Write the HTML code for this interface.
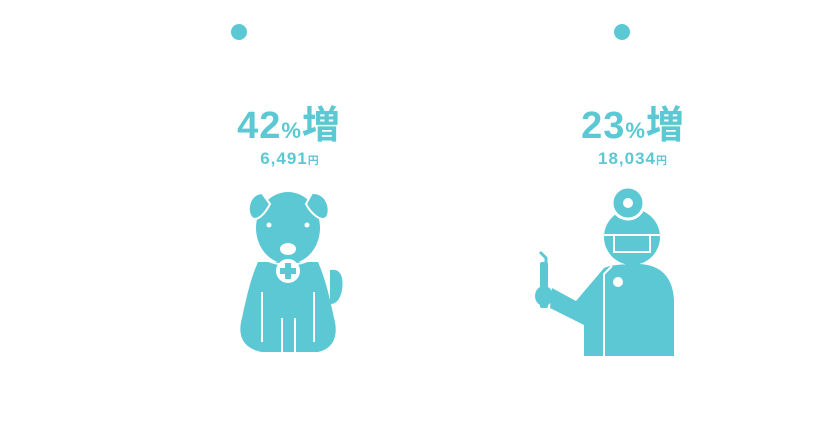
<!DOCTYPE html><html><head><style>
body{margin:0;width:830px;height:430px;background:#fff;overflow:hidden;position:relative;font-family:"Liberation Sans","Noto Sans CJK JP",sans-serif;color:#5bc8d3}
.t{position:absolute;font-weight:bold;white-space:nowrap;text-align:center}
.big{font-size:38px;top:94px;letter-spacing:1px}
.big small{font-size:22px}
.sub{font-size:17px;top:149px;letter-spacing:1px}
.sub small{font-size:11px}
</style></head><body>
<div class="t big" style="left:229px;width:120px">42<small>%</small>増</div>
<div class="t sub" style="left:240px;width:100px">6,491<small>円</small></div>
<div class="t big" style="left:573px;width:120px">23<small>%</small>増</div>
<div class="t sub" style="left:583px;width:100px">18,034<small>円</small></div>
<svg width="830" height="430" style="position:absolute;left:0;top:0" fill="#5bc8d3">
<circle cx="239" cy="32" r="8"/><circle cx="622" cy="32" r="8"/>
<!-- dog -->
<path d="M330 270 C340 268 344 276 342 290 C340 300 336 304 330 304 Z"/>
<path d="M258 262 C250 280 246 300 242 318 C238 332 240 348 262 352 L318 352 C336 348 338 332 334 318 C330 300 326 280 318 262 Z"/>
<ellipse cx="288" cy="228" rx="32" ry="36"/>
<path d="M262 193 C248 194 246 212 252 218 C258 222 266 212 270 204 Z" stroke="#fff" stroke-width="2"/>
<path d="M312 193 C328 192 332 212 326 218 C320 222 310 212 306 204 Z" stroke="#fff" stroke-width="2"/>
<g fill="#fff">
<circle cx="269" cy="225" r="2.5"/><circle cx="307" cy="225" r="2.5"/>
<ellipse cx="288" cy="249" rx="8" ry="6"/>
<circle cx="288" cy="271" r="12"/>
<path d="M262 258 Q288 272 314 258" stroke="#fff" stroke-width="2" fill="none"/>
<rect x="261" y="292" width="2" height="50"/><rect x="313" y="292" width="2" height="50"/>
<rect x="281" y="318" width="2" height="34"/><rect x="294" y="318" width="2" height="34"/>
</g>
<rect x="285" y="263" width="6" height="16"/><rect x="280" y="268" width="16" height="6"/>
<!-- dentist -->
<circle cx="632" cy="237" r="28"/>
<circle cx="628" cy="203" r="16" stroke="#fff" stroke-width="3"/><circle cx="628" cy="203" r="5" fill="#fff"/>
<path d="M603 235 L661 235 M614 235 L614 252 L650 252 L650 235" stroke="#fff" stroke-width="2" fill="none"/>
<path d="M604 268 Q612 264 640 264 Q672 266 674 300 L674 356 L584 356 L584 325 L550 308 L552 288 L576 301 Z"/>
<ellipse cx="544" cy="296" rx="9" ry="10"/>
<rect x="540" y="262" width="8" height="46" rx="2"/>
<path d="M540 252 L546 258 L546 266" stroke="#5bc8d3" stroke-width="3" fill="none"/>
<path d="M612 266 L604 274 L604 356" stroke="#fff" stroke-width="2" fill="none"/>
<circle cx="618" cy="282" r="5" fill="#fff"/>
</svg>
</body></html>
